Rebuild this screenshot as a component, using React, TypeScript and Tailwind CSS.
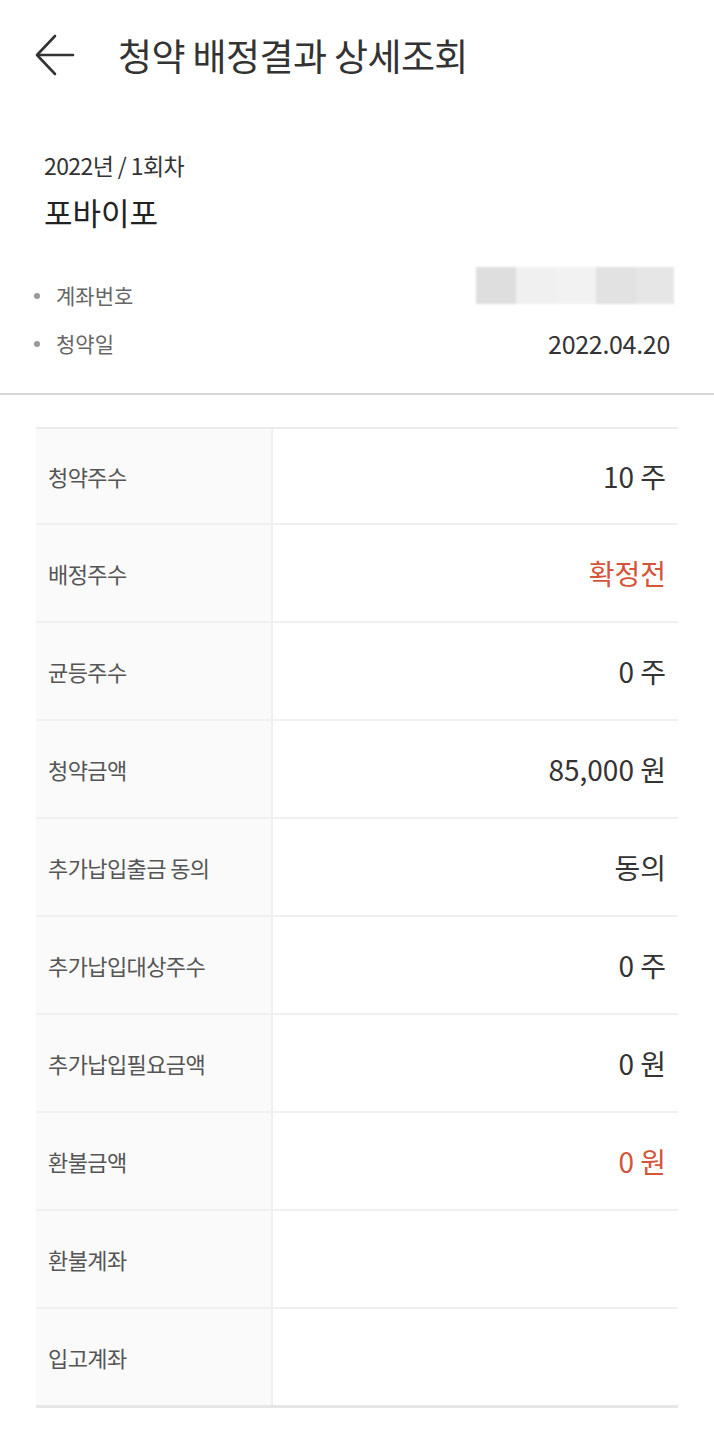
interface Row {
  label: string
  value?: string
  red?: boolean
}

const rows: Row[] = [
  { label: '청약주수', value: '10 주' },
  { label: '배정주수', value: '확정전', red: true },
  { label: '균등주수', value: '0 주' },
  { label: '청약금액', value: '85,000 원' },
  { label: '추가납입출금 동의', value: '동의' },
  { label: '추가납입대상주수', value: '0 주' },
  { label: '추가납입필요금액', value: '0 원' },
  { label: '환불금액', value: '0 원', red: true },
  { label: '환불계좌' },
  { label: '입고계좌' },
]

function BackArrow() {
  return (
    <svg width="40" height="44" viewBox="0 0 40 44" fill="none" stroke="#333" strokeWidth="2.6" strokeLinecap="round" strokeLinejoin="round">
      <path d="M38 22H3" />
      <path d="M20 3L2 22l18 19" />
    </svg>
  )
}

export default function App() {
  return (
    <div
      className="w-[714px] min-h-[1440px] bg-white text-[#333]"
      style={{ fontFamily: '"Noto Sans CJK KR", "Noto Sans", sans-serif' }}
    >
      {/* Header */}
      <div className="h-[110px] flex items-center pl-[35px]">
        <BackArrow />
        <h1 className="ml-[43px] text-[37px] leading-none tracking-[-0.6px] text-[#333]">청약 배정결과 상세조회</h1>
      </div>

      {/* Summary */}
      <div className="px-[44px] pt-[40px]">
        <p className="text-[23px] leading-[30px] tracking-[-0.6px] text-[#333]">2022년 / 1회차</p>
        <p className="mt-[15px] text-[31px] leading-[34px] text-[#222]">포바이포</p>
      </div>

      <div className="mt-[52px] pl-[34px] pr-[44px] flex flex-col gap-[18px]">
        <div className="flex items-center justify-between h-[30px]">
          <div className="flex items-center">
            <span className="w-[6px] h-[6px] rounded-full bg-[#999]" />
            <span className="ml-[16px] text-[21px] text-[#666]">계좌번호</span>
          </div>
          <div className="flex h-[37px] -mt-[21px] -mr-[4px] blur-[1px]">
            <div className="w-[40px] bg-[#dedede]" />
            <div className="w-[40px] bg-[#f0f0f0]" />
            <div className="w-[40px] bg-[#f2f2f2]" />
            <div className="w-[40px] bg-[#e2e2e2]" />
            <div className="w-[38px] bg-[#e6e6e6]" />
          </div>
        </div>
        <div className="flex items-center justify-between h-[30px]">
          <div className="flex items-center">
            <span className="w-[6px] h-[6px] rounded-full bg-[#999]" />
            <span className="ml-[16px] text-[21px] text-[#666]">청약일</span>
          </div>
          <span className="text-[25px] tracking-[-0.3px] text-[#333]">2022.04.20</span>
        </div>
      </div>

      <div className="mt-[34px] h-[2px] bg-[#d6d6d6]" />

      {/* Table */}
      <div className="mx-[36px] mt-[32px] border-t-2 border-[#ececec] border-b-[3px] border-b-[#e6e6e6]">
        {rows.map((r, i) => (
          <div
            key={r.label}
            className={`flex ${i > 0 ? 'h-[98px] border-t-2 border-[#f0f0f0]' : 'h-[94px]'}`}
          >
            <div className="w-[237px] bg-[#fafafa] border-r-2 border-[#efefef] flex items-center pl-[12px] text-[22px] tracking-[-0.6px] text-[#555]">
              {r.label}
            </div>
            <div
              className={`flex-1 flex items-center justify-end pr-[12px] text-[28px] ${r.red ? 'text-[#d4553a]' : 'text-[#333]'}`}
            >
              {r.value}
            </div>
          </div>
        ))}
      </div>
    </div>
  )
}
